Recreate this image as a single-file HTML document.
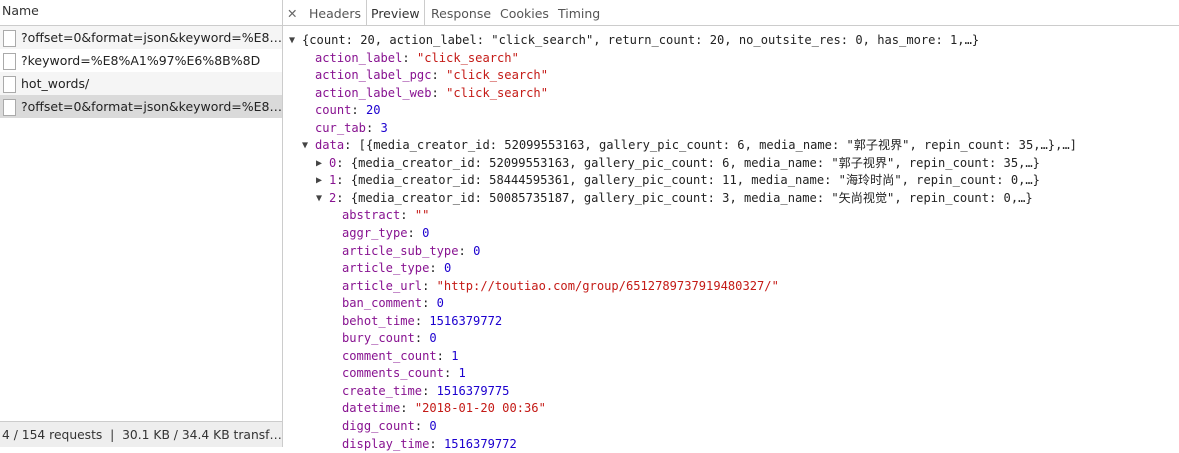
<!DOCTYPE html>
<html><head><meta charset="utf-8"><style>
*{margin:0;padding:0;box-sizing:border-box}
body{width:1179px;height:447px;overflow:hidden;background:#fff;font-family:"DejaVu Sans","Liberation Sans",sans-serif;font-size:12.5px;color:#333;position:relative}
#left{position:absolute;left:0;top:0;width:283px;height:447px;border-right:1px solid #ccc;overflow:hidden}
#lh{height:26px;border-bottom:1px solid #ccc;padding:3px 0 0 2px;color:#333;background:#fff}
.row{height:23px;line-height:23px;padding-left:21px;position:relative;white-space:nowrap;color:#222}
.row:before{content:"";position:absolute;left:3px;top:4px;width:11px;height:15px;border:1px solid #aaa;background:#fff}
.st{background:#f5f5f5}.sel{background:#dadada}
#foot{position:absolute;left:0;top:421px;width:282px;height:26px;background:#eee;border-top:1px solid #ccc;line-height:27px;padding-left:2px;white-space:nowrap;overflow:hidden;color:#333;font-size:12.3px}
#tabs{position:absolute;left:283px;top:0;right:0;height:26px;border-bottom:1px solid #ccc;white-space:nowrap}
#tabs span{position:absolute;top:0;height:26px;line-height:28px;color:#555}
#pre{position:absolute;left:283px;top:32px;width:896px;font-family:"DejaVu Sans Mono","Liberation Mono","Noto Sans CJK SC",monospace;font-size:12.1px;color:#222}
.l{height:17.55px;line-height:17.55px;position:relative;white-space:pre}
.k{color:#881391}.s{color:#c41a16}.n{color:#1c00cf}
.t{position:absolute;font-size:10px;color:#444}
</style></head><body>
<div id="left">
<div id="lh">Name</div>
<div class="row st">?offset=0&amp;format=json&amp;keyword=%E8…</div>
<div class="row">?keyword=%E8%A1%97%E6%8B%8D</div>
<div class="row st">hot_words/</div>
<div class="row sel">?offset=0&amp;format=json&amp;keyword=%E8…</div>
</div>
<div id="foot">4 / 154 requests &nbsp;|&nbsp; 30.1 KB / 34.4 KB transf…</div>
<div id="tabs">
<span style="left:4px;color:#666">✕</span>
<span style="left:26px">Headers</span>
<span style="left:83px;width:59px;border-left:1px solid #ccc;border-right:1px solid #ccc;padding-left:4px;color:#333">Preview</span>
<span style="left:148px">Response</span>
<span style="left:217px">Cookies</span>
<span style="left:275px">Timing</span>
</div>
<div id="pre"><div class="l" style="padding-left:19px"><span class="t" style="left:6px">▼</span>{count: 20, action_label: "click_search", return_count: 20, no_outsite_res: 0, has_more: 1,…}</div><div class="l" style="padding-left:32px"><span class="k">action_label</span>: <span class="s">"click_search"</span></div><div class="l" style="padding-left:32px"><span class="k">action_label_pgc</span>: <span class="s">"click_search"</span></div><div class="l" style="padding-left:32px"><span class="k">action_label_web</span>: <span class="s">"click_search"</span></div><div class="l" style="padding-left:32px"><span class="k">count</span>: <span class="n">20</span></div><div class="l" style="padding-left:32px"><span class="k">cur_tab</span>: <span class="n">3</span></div><div class="l" style="padding-left:32px"><span class="t" style="left:19px">▼</span><span class="k">data</span>: [{media_creator_id: 52099553163, gallery_pic_count: 6, media_name: "郭子视界", repin_count: 35,…},…]</div><div class="l" style="padding-left:46px"><span class="t" style="left:33px">▶</span><span class="k">0</span>: {media_creator_id: 52099553163, gallery_pic_count: 6, media_name: "郭子视界", repin_count: 35,…}</div><div class="l" style="padding-left:46px"><span class="t" style="left:33px">▶</span><span class="k">1</span>: {media_creator_id: 58444595361, gallery_pic_count: 11, media_name: "海玲时尚", repin_count: 0,…}</div><div class="l" style="padding-left:46px"><span class="t" style="left:33px">▼</span><span class="k">2</span>: {media_creator_id: 50085735187, gallery_pic_count: 3, media_name: "矢尚视觉", repin_count: 0,…}</div><div class="l" style="padding-left:59px"><span class="k">abstract</span>: <span class="s">""</span></div><div class="l" style="padding-left:59px"><span class="k">aggr_type</span>: <span class="n">0</span></div><div class="l" style="padding-left:59px"><span class="k">article_sub_type</span>: <span class="n">0</span></div><div class="l" style="padding-left:59px"><span class="k">article_type</span>: <span class="n">0</span></div><div class="l" style="padding-left:59px"><span class="k">article_url</span>: <span class="s">"http://toutiao.com/group/6512789737919480327/"</span></div><div class="l" style="padding-left:59px"><span class="k">ban_comment</span>: <span class="n">0</span></div><div class="l" style="padding-left:59px"><span class="k">behot_time</span>: <span class="n">1516379772</span></div><div class="l" style="padding-left:59px"><span class="k">bury_count</span>: <span class="n">0</span></div><div class="l" style="padding-left:59px"><span class="k">comment_count</span>: <span class="n">1</span></div><div class="l" style="padding-left:59px"><span class="k">comments_count</span>: <span class="n">1</span></div><div class="l" style="padding-left:59px"><span class="k">create_time</span>: <span class="n">1516379775</span></div><div class="l" style="padding-left:59px"><span class="k">datetime</span>: <span class="s">"2018-01-20 00:36"</span></div><div class="l" style="padding-left:59px"><span class="k">digg_count</span>: <span class="n">0</span></div><div class="l" style="padding-left:59px"><span class="k">display_time</span>: <span class="n">1516379772</span></div></div>
</body></html>
